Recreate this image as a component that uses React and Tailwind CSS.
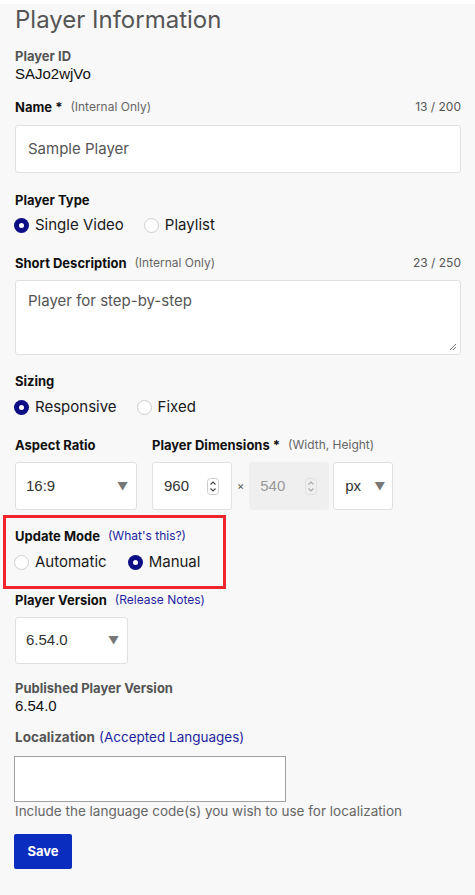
import React from 'react';

const sans = { fontFamily: 'Inter, "Noto Sans", sans-serif' };
const arial = { fontFamily: '"Liberation Sans", Arial, sans-serif' };

const Radio = ({ checked, label }) => (
  <label className="flex items-center mr-[20px]">
    {checked ? (
      <span className="w-[15px] h-[15px] rounded-full bg-[#0d0d86] flex items-center justify-center">
        <span className="w-[5px] h-[5px] rounded-full bg-white"></span>
      </span>
    ) : (
      <span className="w-[15px] h-[15px] rounded-full bg-white border border-[#cfcfcf]"></span>
    )}
    <span className="ml-[6px] text-[15px] text-[#1a1a1a]">{label}</span>
  </label>
);

const Arrow = () => <span className="text-[11px] text-[#777]">▼</span>;

const Spinner = ({ disabled }) => (
  <svg width="12" height="17" viewBox="0 0 12 17" className={disabled ? 'opacity-40' : ''}>
    <rect x="0.5" y="0.5" width="11" height="16" rx="3" fill="none" stroke="#ccc" />
    <path d="M3.5 6.5 L6 4 L8.5 6.5" fill="none" stroke="#444" strokeWidth="1.1" />
    <path d="M3.5 10.5 L6 13 L8.5 10.5" fill="none" stroke="#444" strokeWidth="1.1" />
  </svg>
);

const App = () => {
  return (
    <div className="min-h-screen bg-[#f8f8f8] px-[15px] pb-10" style={sans}>
      <h1 className="mt-[4px] text-[24px] leading-[32px] text-[#555] font-normal">Player Information</h1>

      <div className="mt-[11px] text-[13px] leading-[18px] font-bold text-[#555]">Player ID</div>
      <div className="text-[15px] leading-[18px] text-[#111]" style={arial}>SAJo2wjVo</div>

      <div className="mt-[15px] flex items-center justify-between leading-[18px]">
        <div className="flex items-center">
          <span className="text-[13px] font-bold text-[#111]">Name *</span>
          <span className="ml-[8px] text-[12px] text-[#666]">(Internal Only)</span>
        </div>
        <span className="text-[12px] text-[#555] mr-[-1px]">13 / 200</span>
      </div>
      <div className="mt-[9px] h-[48px] w-[446px] bg-white border border-[#e0e0e0] rounded-[3px] flex items-center px-[12px] text-[15px] text-[#555]">
        Sample Player
      </div>

      <div className="mt-[18px] text-[13px] leading-[18px] font-bold text-[#111]">Player Type</div>
      <div className="mt-[6px] flex items-center h-[20px] ml-[-1px]">
        <Radio checked label="Single Video" />
        <Radio label="Playlist" />
      </div>

      <div className="mt-[19px] flex items-center justify-between leading-[18px]">
        <div className="flex items-center">
          <span className="text-[13px] font-bold text-[#111]">Short Description</span>
          <span className="ml-[8px] text-[12px] text-[#666]">(Internal Only)</span>
        </div>
        <span className="text-[12px] text-[#555] mr-[-1px]">23 / 250</span>
      </div>
      <div className="relative mt-[8px] h-[75px] w-[446px] bg-white border border-[#e0e0e0] rounded-[3px] px-[12px] pt-[10px] text-[15px] leading-[20px] text-[#555]">
        Player for step-by-step
        <svg width="8" height="8" viewBox="0 0 8 8" className="absolute right-[3px] bottom-[3px]">
          <path d="M1 7 L7 1 M4 7 L7 4" stroke="#777" strokeWidth="1" />
        </svg>
      </div>

      <div className="mt-[17px] text-[13px] leading-[18px] font-bold text-[#111]">Sizing</div>
      <div className="mt-[7px] flex items-center h-[20px] ml-[-1px]">
        <Radio checked label="Responsive" />
        <Radio label="Fixed" />
      </div>

      <div className="mt-[19px] flex">
        <div className="w-[137px]">
          <div className="text-[13px] leading-[18px] font-bold text-[#111]">Aspect Ratio</div>
          <div className="mt-[8px] h-[48px] w-[122px] bg-white border border-[#e0e0e0] rounded-[3px] flex items-center justify-between pl-[10px] pr-[8px]">
            <span className="text-[15px] text-[#333]" style={arial}>16:9</span>
            <Arrow />
          </div>
        </div>
        <div>
          <div className="flex items-center leading-[18px]">
            <span className="text-[13px] font-bold text-[#111]">Player Dimensions *</span>
            <span className="ml-[8px] text-[12px] text-[#666]">(Width, Height)</span>
          </div>
          <div className="mt-[8px] flex items-center">
            <div className="h-[48px] w-[80px] bg-white border border-[#e0e0e0] rounded-[3px] flex items-center justify-between pl-[11px] pr-[12px]">
              <span className="text-[15px] text-[#333]" style={arial}>960</span>
              <Spinner />
            </div>
            <span className="mx-[5px] text-[11px] text-[#555]">×</span>
            <div className="h-[48px] w-[80px] bg-[#efefef] rounded-[3px] flex items-center justify-between pl-[11px] pr-[12px]">
              <span className="text-[15px] text-[#999]" style={arial}>540</span>
              <Spinner disabled />
            </div>
            <div className="ml-[4px] h-[48px] w-[60px] bg-white border border-[#e0e0e0] rounded-[3px] flex items-center justify-between pl-[11px] pr-[7px]">
              <span className="text-[15px] text-[#333]" style={arial}>px</span>
              <Arrow />
            </div>
          </div>
        </div>
      </div>

      <div className="mt-[5px] ml-[-12px] w-[223px] border-[3px] border-[#f0262d] pl-[9px] pt-[9px] pb-[14px]">
        <div className="flex items-center leading-[18px]">
          <span className="text-[13px] font-bold text-[#111]">Update Mode</span>
          <span className="ml-[8px] text-[12px] text-[#1f1f9f]">(What's this?)</span>
        </div>
        <div className="mt-[7px] flex items-center h-[20px] ml-[-1px]">
          <Radio label="Automatic" />
          <span className="ml-[1px]"></span>
          <Radio checked label="Manual" />
        </div>
      </div>

      <div className="mt-[2px] flex items-center leading-[18px]">
        <span className="text-[13px] font-bold text-[#111]">Player Version</span>
        <span className="ml-[8px] text-[12px] text-[#1f1f9f]">(Release Notes)</span>
      </div>
      <div className="mt-[8px] h-[47px] w-[113px] bg-white border border-[#e0e0e0] rounded-[3px] flex items-center justify-between pl-[10px] pr-[8px]">
        <span className="text-[15px] text-[#333]" style={arial}>6.54.0</span>
        <Arrow />
      </div>

      <div className="mt-[15px] text-[13px] leading-[18px] font-bold text-[#555]">Published Player Version</div>
      <div className="text-[15px] leading-[18px] text-[#111]" style={arial}>6.54.0</div>

      <div className="mt-[13px] flex items-center leading-[18px] text-[13.5px]">
        <span className="font-bold text-[#555]">Localization</span>
        <span className="ml-[4px] text-[#1f1f9f]">(Accepted Languages)</span>
      </div>
      <div className="mt-[10px] ml-[-1px] h-[46px] w-[272px] bg-white border border-[#a0a0a0]"></div>
      <div className="text-[13.5px] leading-[18px] text-[#666]">Include the language code(s) you wish to use for localization</div>

      <button className="mt-[14px] ml-[-1px] h-[35px] w-[58px] bg-[#0b2dbf] rounded-[2px] text-white text-[13px] font-bold">
        Save
      </button>
    </div>
  );
};

export default App;
